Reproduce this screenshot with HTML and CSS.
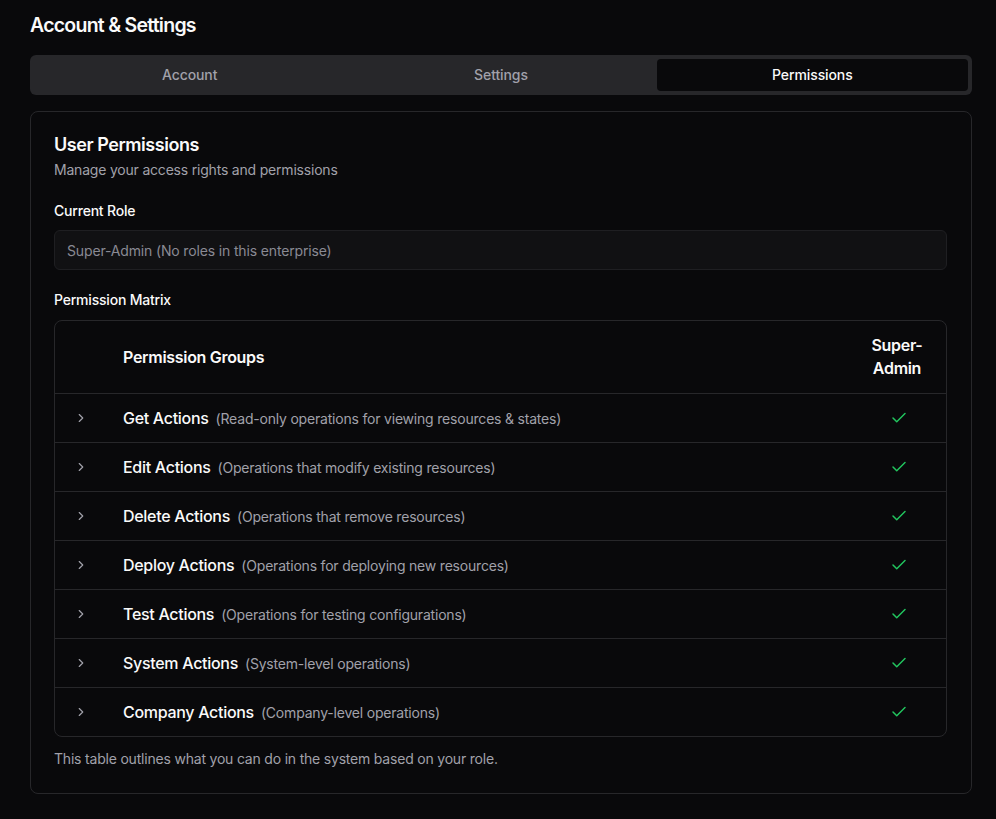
FILE: index.html
```html
<!DOCTYPE html>
<html>
<head>
<meta charset="utf-8">
<link rel="stylesheet" href="styles.css">
</head>
<body>
<div class="page">
  <h1 class="title">Account &amp; Settings</h1>
  <div class="tabs">
    <div class="tab">Account</div>
    <div class="tab">Settings</div>
    <div class="tab active">Permissions</div>
  </div>
  <div class="card">
    <h2 class="card-title">User Permissions</h2>
    <p class="card-desc">Manage your access rights and permissions</p>
    <div class="label role-label">Current Role</div>
    <div class="input">Super-Admin (No roles in this enterprise)</div>
    <div class="label matrix-label">Permission Matrix</div>
    <div class="table">
      <div class="row head">
        <div class="cell-chev"></div>
        <div class="cell-name">Permission Groups</div>
        <div class="cell-role">Super-<br>Admin</div>
      </div>
      <div class="row">
        <div class="cell-chev"><svg viewBox="0 0 24 24"><path d="m9 18 6-6-6-6"/></svg></div>
        <div class="cell-name"><span class="name">Get Actions</span><span class="desc">(Read-only operations for viewing resources &amp; states)</span></div>
        <div class="cell-role"><svg class="check" viewBox="0 0 24 24"><path d="M20 6 9 17l-5-5"/></svg></div>
      </div>
      <div class="row">
        <div class="cell-chev"><svg viewBox="0 0 24 24"><path d="m9 18 6-6-6-6"/></svg></div>
        <div class="cell-name"><span class="name">Edit Actions</span><span class="desc">(Operations that modify existing resources)</span></div>
        <div class="cell-role"><svg class="check" viewBox="0 0 24 24"><path d="M20 6 9 17l-5-5"/></svg></div>
      </div>
      <div class="row">
        <div class="cell-chev"><svg viewBox="0 0 24 24"><path d="m9 18 6-6-6-6"/></svg></div>
        <div class="cell-name"><span class="name">Delete Actions</span><span class="desc">(Operations that remove resources)</span></div>
        <div class="cell-role"><svg class="check" viewBox="0 0 24 24"><path d="M20 6 9 17l-5-5"/></svg></div>
      </div>
      <div class="row">
        <div class="cell-chev"><svg viewBox="0 0 24 24"><path d="m9 18 6-6-6-6"/></svg></div>
        <div class="cell-name"><span class="name">Deploy Actions</span><span class="desc">(Operations for deploying new resources)</span></div>
        <div class="cell-role"><svg class="check" viewBox="0 0 24 24"><path d="M20 6 9 17l-5-5"/></svg></div>
      </div>
      <div class="row">
        <div class="cell-chev"><svg viewBox="0 0 24 24"><path d="m9 18 6-6-6-6"/></svg></div>
        <div class="cell-name"><span class="name">Test Actions</span><span class="desc">(Operations for testing configurations)</span></div>
        <div class="cell-role"><svg class="check" viewBox="0 0 24 24"><path d="M20 6 9 17l-5-5"/></svg></div>
      </div>
      <div class="row">
        <div class="cell-chev"><svg viewBox="0 0 24 24"><path d="m9 18 6-6-6-6"/></svg></div>
        <div class="cell-name"><span class="name">System Actions</span><span class="desc">(System-level operations)</span></div>
        <div class="cell-role"><svg class="check" viewBox="0 0 24 24"><path d="M20 6 9 17l-5-5"/></svg></div>
      </div>
      <div class="row">
        <div class="cell-chev"><svg viewBox="0 0 24 24"><path d="m9 18 6-6-6-6"/></svg></div>
        <div class="cell-name"><span class="name">Company Actions</span><span class="desc">(Company-level operations)</span></div>
        <div class="cell-role"><svg class="check" viewBox="0 0 24 24"><path d="M20 6 9 17l-5-5"/></svg></div>
      </div>
    </div>
    <p class="foot">This table outlines what you can do in the system based on your role.</p>
  </div>
</div>
</body>
</html>
```

FILE: styles.css
```css
* { box-sizing: border-box; }
html, body {
  margin: 0;
  background: #09090b;
  color: #fafafa;
  font-family: Inter, "Noto Sans", sans-serif;
}
.page {
  padding: 11px 24px 24px 30px;
}
.title {
  margin: 0;
  font-size: 19.5px;
  line-height: 28px;
  font-weight: 600;
  letter-spacing: -0.75px;
}
.tabs {
  margin-top: 16px;
  height: 40px;
  background: #27272a;
  border-radius: 6px;
  padding: 4px;
  display: grid;
  grid-template-columns: 1fr 1fr 1fr;
}
.tab {
  display: flex;
  align-items: center;
  justify-content: center;
  font-size: 14px;
  font-weight: 500;
  letter-spacing: -0.1px;
  color: #a1a1aa;
  border-radius: 4px;
  padding-bottom: 1px;
}
.tab.active {
  background: #09090b;
  color: #fafafa;
}
.card {
  margin-top: 16px;
  border: 1px solid #27272a;
  border-radius: 8px;
  padding: 21px 24px 24px 23px;
}
.card-title {
  margin: 0;
  font-size: 18px;
  line-height: 24px;
  font-weight: 600;
  letter-spacing: -0.45px;
}
.card-desc {
  margin: 3px 0 0;
  font-size: 14px;
  line-height: 20px;
  letter-spacing: -0.2px;
  color: #a1a1aa;
}
.label {
  font-size: 14px;
  line-height: 20px;
  font-weight: 500;
  letter-spacing: -0.2px;
}
.role-label { margin-top: 21px; }
.matrix-label { margin-top: 20px; }
.input {
  margin-top: 9px;
  height: 40px;
  border: 1px solid #1f1f22;
  background: #111113;
  border-radius: 6px;
  padding: 0 12px;
  display: flex;
  align-items: center;
  font-size: 14px;
  letter-spacing: -0.15px;
  color: #8a8a93;
}
.table {
  margin-top: 10px;
  border: 1px solid #27272a;
  border-radius: 8px;
}
.row {
  display: flex;
  align-items: center;
  height: 49px;
  border-top: 1px solid #27272a;
}
.row.head {
  border-top: none;
  height: 72px;
}
.cell-chev {
  width: 68px;
  display: flex;
  padding-left: 19px;
}
.cell-chev svg {
  width: 14px;
  height: 14px;
  fill: none;
  stroke: #a1a1aa;
  stroke-width: 2;
  stroke-linecap: round;
  stroke-linejoin: round;
}
.cell-name {
  flex: 1;
  display: flex;
  align-items: baseline;
}
.head .cell-name {
  font-size: 16px;
  font-weight: 600;
  letter-spacing: -0.3px;
}
.cell-role {
  width: 98px;
  display: flex;
  justify-content: center;
  text-align: center;
}
.row:not(.head) .cell-role {
  padding-left: 3px;
}
.head .cell-role {
  font-size: 16px;
  font-weight: 600;
  line-height: 23px;
  letter-spacing: -0.3px;
}
.name {
  font-size: 16px;
  font-weight: 500;
  letter-spacing: -0.3px;
}
.desc {
  margin-left: 7px;
  font-size: 14px;
  letter-spacing: -0.2px;
  color: #a1a1aa;
}
.check {
  width: 18px;
  height: 18px;
  fill: none;
  stroke: #22c55e;
  stroke-width: 2;
  stroke-linecap: round;
  stroke-linejoin: round;
}
.foot {
  margin: 12px 0 0;
  font-size: 14px;
  line-height: 20px;
  letter-spacing: -0.2px;
  color: #a1a1aa;
}
```
